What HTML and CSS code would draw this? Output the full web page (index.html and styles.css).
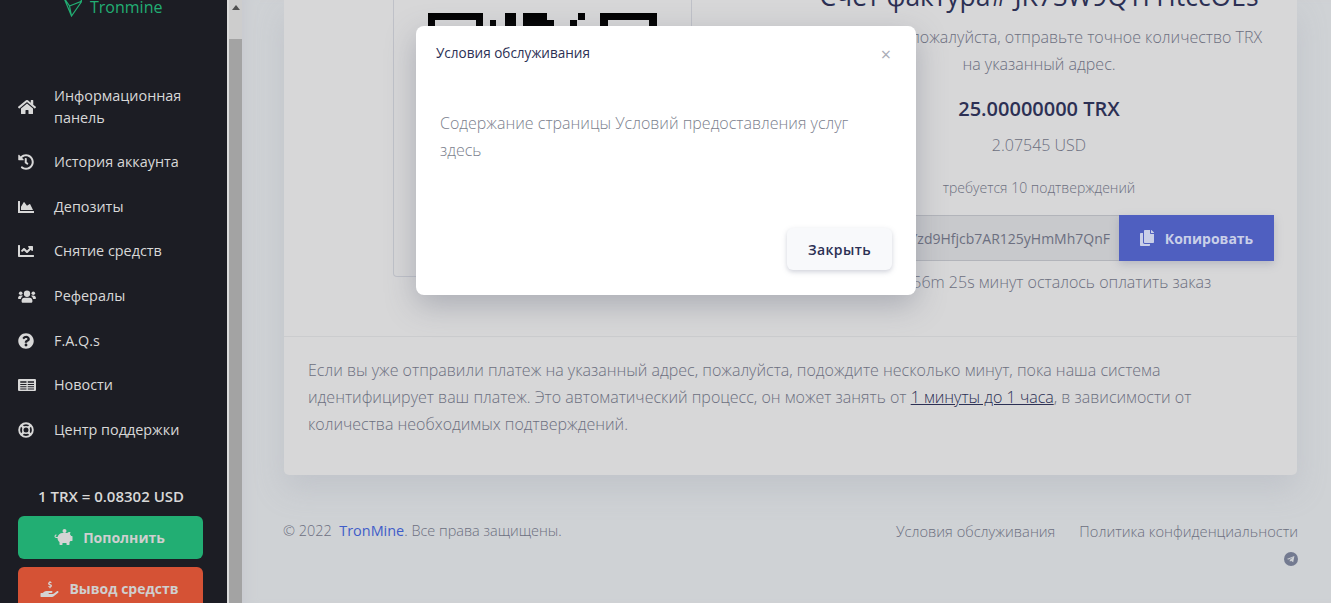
FILE: index.html
```html
<!DOCTYPE html>
<html lang="ru">
<head>
<meta charset="utf-8">
<title>Tronmine</title>
<link rel="stylesheet" href="styles.css">
</head>
<body>
<div class="app">
  <aside class="sidebar">
    <div class="logo">
      <svg class="logo-mark" viewBox="0 0 18 22"><path d="M0 3 7.500 21 18 6 12 0M0 3 5.500 11 7.500 21M5.500 11 18 6"/></svg>
      <span class="logo-text">Tronmine</span>
    </div>
    <ul class="nav">
      <li class="nav-item nav-item-wrap"><span class="nav-icon"><svg viewBox="0 0 576 512"><path d="M280.37 148.26L96 300.11V464a16 16 0 0 0 16 16l112.06-.29a16 16 0 0 0 15.92-16V368a16 16 0 0 1 16-16h64a16 16 0 0 1 16 16v95.64a16 16 0 0 0 16 16.05L464 480a16 16 0 0 0 16-16V300L295.67 148.26a12.19 12.19 0 0 0-15.3 0zM571.6 251.47L488 182.56V44.05a12 12 0 0 0-12-12h-56a12 12 0 0 0-12 12v72.61L318.47 43a48 48 0 0 0-61 0L4.34 251.47a12 12 0 0 0-1.6 16.9l25.5 31A12 12 0 0 0 45.15 301l235.22-193.74a12.19 12.19 0 0 1 15.3 0L530.9 301a12 12 0 0 0 16.9-1.6l25.5-31a12 12 0 0 0-1.7-16.93z"/></svg></span><span>Информационная панель</span></li>
      <li class="nav-item"><span class="nav-icon"><svg viewBox="0 0 512 512"><path d="M504 255.5c.3 136.6-111.1 248.4-247.7 248.5-59 0-113.2-20.5-155.8-54.9-11.1-8.9-11.9-25.5-1.9-35.5l11.3-11.3c8.6-8.6 22.2-9.5 31.6-2C173 425.1 212.8 440 256 440c101.7 0 184-82.3 184-184 0-101.7-82.3-184-184-184-48.8 0-93.1 19-126 49.9l50.8 50.8c10.1 10.1 2.9 27.3-11.3 27.3H24c-8.8 0-16-7.2-16-16V38.6c0-14.3 17.2-21.4 27.3-11.3l49.4 49.4C129.4 31.9 190.1 8 256.4 8 393 8 503.7 118.9 504 255.5zM315 334.2l9.8-12.6c8.1-10.5 6.3-25.5-4.2-33.7L280 256.2V152c0-13.3-10.7-24-24-24h-16c-13.3 0-24 10.7-24 24v135.1l65.4 50.9c10.5 8.1 25.5 6.3 33.6-3.8z"/></svg></span><span>История аккаунта</span></li>
      <li class="nav-item"><span class="nav-icon"><svg viewBox="0 0 512 512"><path d="M500 384c6.6 0 12 5.4 12 12v40c0 6.6-5.4 12-12 12H12c-6.6 0-12-5.4-12-12V76c0-6.6 5.4-12 12-12h40c6.6 0 12 5.4 12 12v308h436zM372.7 159.5L288 216l-85.3-113.7c-5.1-6.8-15.5-6.3-19.9 1L96 248v104h384l-89.9-187.8c-3.2-6.5-11.4-8.7-17.4-4.7z"/></svg></span><span>Депозиты</span></li>
      <li class="nav-item"><span class="nav-icon"><svg viewBox="0 0 512 512"><path d="M496 384H64V80c0-8.84-7.16-16-16-16H16C7.16 64 0 71.16 0 80v336c0 17.67 14.33 32 32 32h464c8.84 0 16-7.16 16-16v-32c0-8.84-7.16-16-16-16zM464 96H345.94c-21.38 0-32.09 25.85-16.97 40.97l32.4 32.4L288 242.75l-73.37-73.37c-12.5-12.5-32.76-12.5-45.25 0l-68.69 68.69c-6.25 6.25-6.25 16.38 0 22.63l22.62 22.62c6.25 6.25 16.38 6.25 22.63 0L192 237.25l73.37 73.37c12.5 12.5 32.76 12.5 45.25 0l96-96 32.4 32.4c15.12 15.12 40.97 4.41 40.97-16.97V112c0-8.84-7.16-16-16-16z"/></svg></span><span>Снятие средств</span></li>
      <li class="nav-item"><span class="nav-icon"><svg viewBox="0 0 640 512"><circle cx="96" cy="160" r="64"/><circle cx="544" cy="160" r="64"/><circle cx="320" cy="176" r="112"/><path d="M0 336c0-53 43-96 96-96h32c18 0 34 5 48 13-40 22-68 63-75 111H32c-18 0-32-10-32-28zM640 336c0-53-43-96-96-96h-32c-18 0-34 5-48 13 40 22 68 63 75 111h69c18 0 32-10 32-28zM224 316h192c53 0 96 43 96 96v36c0 26-22 48-48 48H176c-26 0-48-22-48-48v-36c0-53 43-96 96-96z"/></svg></span><span>Рефералы</span></li>
      <li class="nav-item"><span class="nav-icon"><svg viewBox="0 0 512 512"><path d="M504 256c0 136.997-111.043 248-248 248S8 392.997 8 256C8 119.083 119.043 8 256 8s248 111.083 248 248zM262.655 90c-54.497 0-89.255 22.957-116.549 63.758-3.536 5.286-2.353 12.415 2.715 16.258l34.699 26.31c5.205 3.947 12.621 3.008 16.665-2.122 17.864-22.658 30.113-35.797 57.303-35.797 20.429 0 45.698 13.148 45.698 32.958 0 14.976-12.363 22.667-32.534 33.976C247.128 238.528 216 254.941 216 296v4c0 6.627 5.373 12 12 12h56c6.627 0 12-5.373 12-12v-1.333c0-28.462 83.186-29.647 83.186-106.667 0-58.002-60.165-102-116.531-102zM256 338c-25.365 0-46 20.635-46 46 0 25.364 20.635 46 46 46s46-20.636 46-46c0-25.365-20.635-46-46-46z"/></svg></span><span>F.A.Q.s</span></li>
      <li class="nav-item"><span class="nav-icon"><svg viewBox="0 0 576 512"><path fill-rule="evenodd" d="M40 64h496c22 0 40 18 40 40v304c0 22-18 40-40 40H40c-22 0-40-18-40-40V104c0-22 18-40 40-40zM72 136v48h200v-48zM312 136v48h200v-48zM72 224v32h200v-32zM312 224v32h200v-32zM72 296v32h200v-32zM312 296v32h200v-32zM72 368v32h200v-32zM312 368v32h200v-32z"/></svg></span><span>Новости</span></li>
      <li class="nav-item"><span class="nav-icon"><svg class="ring-icon" viewBox="0 0 512 512"><circle cx="256" cy="256" r="218" stroke-width="60"/><circle cx="256" cy="256" r="104" stroke-width="48"/><path stroke-width="74" d="M102 102 180 180M410 102 332 180M102 410 180 332M410 410 332 332"/></svg></span><span>Центр поддержки</span></li>
    </ul>
    <div class="rate">1 TRX = 0.08302 USD</div>
    <div class="side-actions">
      <a class="side-btn side-btn-green"><svg class="side-btn-icon" viewBox="0 0 576 512"><path d="M560 224h-29.5c-8.8-20-21.6-37.7-37.4-52.5L512 96h-32c-29.4 0-55.4 13.5-73 34.3-7.6-1.1-15.1-2.3-23-2.3H256c-77.4 0-141.9 55-156.8 128H56c-14.8 0-26.5-13.5-23.5-28.8C34.7 215.8 45.4 208 57 208h1c3.3 0 6-2.7 6-6v-20c0-3.3-2.7-6-6-6-28.5 0-53.9 20.4-57.5 48.6C-3.9 258.8 22.7 288 56 288h40c0 52.2 25.4 98.1 64 127.3V496c0 8.8 7.2 16 16 16h64c8.8 0 16-7.2 16-16v-48h128v48c0 8.8 7.2 16 16 16h64c8.8 0 16-7.2 16-16v-80.9c11.8-8.9 22.3-19.4 31.3-31.1H560c8.8 0 16-7.2 16-16V240c0-8.8-7.2-16-16-16z"/><circle cx="320" cy="64" r="64"/></svg><span>Пополнить</span></a>
      <a class="side-btn side-btn-red"><svg class="side-btn-icon" viewBox="0 0 576 512"><path d="M565.3 328.1c-11.8-10.7-30.2-10-42.6 0L430.3 402c-11.3 9.1-25.4 14-40 14H272c-8.8 0-16-7.2-16-16s7.2-16 16-16h78.3c15.9 0 30.7-10.9 33.3-26.6 3.3-20-12.1-37.4-31.6-37.4H192c-27 0-53.1 9.3-74.1 26.3L71.4 384H16c-8.8 0-16 7.2-16 16v96c0 8.8 7.2 16 16 16h356.8c14.5 0 28.6-4.9 40-14L564 377c15.2-12.1 16.4-35.3 1.3-48.9z"/><path d="M288 0v30c-28 5-46 26-46 52 0 28 20 44 46 52l20 7c10 3 14 8 14 15 0 9-8 15-19 15h-20c-8 0-15-3-21-8l-20 24c10 9 24 15 46 17v28h32v-28c28-4 46-25 46-52 0-28-20-44-46-52l-20-7c-10-3-14-8-14-15 0-9 8-15 19-15h16c8 0 15 3 21 8l20-24c-10-9-24-15-42-17V0z"/></svg><span>Вывод средств</span></a>
    </div>
  </aside>
  <div class="fake-scrollbar">
    <span class="scroll-arrow"></span>
    <span class="scroll-thumb"></span>
  </div>
  <main class="main">
    <section class="card">
      <div class="card-top">
        <div class="qr-box">
          <svg class="qr" viewBox="0 0 230 230" shape-rendering="crispEdges">
            <path fill-rule="evenodd" d="M0 0H55V55H0ZM7 7V48H48V7Z"/>
            <path fill-rule="evenodd" d="M172 0H229V55H172ZM180 7V48H221V7Z"/>
            <path d="M62 7h6v40h-6zM77 0h11v40h-11zM95 0h24v40h-24zM119 7h7v20h-7zM142 7h7v30h-7zM150 0h7v7h-7z"/>
          </svg>
        </div>
        <div class="pay">
          <h2 class="pay-title">Счет фактура# JK7SW9QYFHtccOEs</h2>
          <p class="pay-text">Для оплаты, пожалуйста, отправьте точное количество TRX на указанный адрес.</p>
          <div class="pay-amount">25.00000000 TRX</div>
          <div class="pay-usd">2.07545 USD</div>
          <div class="pay-conf">требуется 10 подтверждений</div>
          <div class="copy-row">
            <div class="copy-input"><span>TRYzd9Hfjcb7AR125yHmMh7QnF</span></div>
            <a class="copy-btn"><svg class="copy-icon" viewBox="0 0 448 512"><path d="M320 448v40c0 13.3-10.7 24-24 24H24c-13.3 0-24-10.7-24-24V120c0-13.3 10.7-24 24-24h72v296c0 30.9 25.1 56 56 56h168zm0-344V0H152c-13.3 0-24 10.7-24 24v368c0 13.3 10.7 24 24 24h272c13.3 0 24-10.7 24-24V128H344c-13.200 0-24-10.800-24-24zm120.970-31.030L375 7.030A24 24 0 0 0 358.060 0H352v96h96v-6.060a24 24 0 0 0-7.030-16.970z"/></svg><span>Копировать</span></a>
          </div>
          <div class="pay-timer">0d 0h 56m 25s минут осталось оплатить заказ</div>
        </div>
      </div>
      <div class="card-note">
        Если вы уже отправили платеж на указанный адрес, пожалуйста, подождите несколько минут, пока наша система идентифицирует ваш платеж. Это автоматический процесс, он может занять от <a class="note-link">1 минуты до 1 часа</a>, в зависимости от количества необходимых подтверждений.
      </div>
    </section>
    <footer class="footer">
      <div class="footer-row">
        <span>© 2022 &nbsp;<a class="brand-link">TronMine</a>. Все права защищены.</span>
        <span class="footer-links"><a>Условия обслуживания</a><a>Политика конфиденциальности</a></span>
      </div>
      <div class="footer-social">
        <svg class="tg" viewBox="0 0 14 14"><circle cx="7" cy="7" r="7" class="tg-bg"/><path class="tg-plane" d="M2.800 6.900 10.400 4 9.200 10.300 7 8.700 5.900 9.700 5.700 8 9 5.200 4.700 7.600Z"/></svg>
      </div>
    </footer>
  </main>
</div>
<div class="modal" role="dialog">
  <div class="modal-head">
    <h5 class="modal-title">Условия обслуживания</h5>
    <span class="modal-close">×</span>
  </div>
  <div class="modal-body">Содержание страницы Условий предоставления услуг здесь</div>
  <div class="modal-foot"><a class="modal-btn">Закрыть</a></div>
</div>
</body>
</html>
```
FILE: styles.css
```css
* { box-sizing: border-box; }
html, body { margin: 0; height: 100%; overflow: hidden; }
body { font-family: "Open Sans", "Noto Sans", sans-serif; background: #cfd2d5; color: #6c6f80; }
a { text-decoration: none; }
h2, h5, p { margin: 0; }

.app { display: flex; height: 603px; overflow: hidden; }

.sidebar { width: 227px; flex: none; background: #1c1d24; color: #d8d8d8; display: flex; flex-direction: column; overflow: hidden; }
.logo { display: flex; height: 24px; margin-top: -5px; padding-left: 64px; gap: 8px; flex: none; }
.logo-mark { width: 18px; height: 22px; flex: none; fill: none; stroke: #22ae73; stroke-width: 1.2; }
.logo-text { font-size: 16px; font-weight: 400; color: #22ae73; line-height: 24px; }

.nav { list-style: none; margin: 54.800px 0 0; padding: 0; flex: none; }
.nav-item { display: flex; align-items: center; padding: 11.350px 30px 11.350px 18px; font-size: 14.400px; line-height: 22px; }
.nav-item-wrap { padding-bottom: 10.350px; }
.nav-icon { width: 36px; flex: none; display: flex; }
.nav-icon svg { height: 16px; width: auto; max-width: 18px; fill: #d8d8d8; }
.nav-icon .ring-icon { fill: none; stroke: #d8d8d8; }

.rate { margin-top: 33.700px; padding-right: 5px; text-align: center; font-size: 15px; font-weight: 600; line-height: 20px; color: #d8d8d8; flex: none; }
.side-actions { display: flex; flex-direction: column; gap: 8px; margin: 10px 24px 0 18px; flex: none; }
.side-btn { height: 43px; padding-right: 2px; border-radius: 6px; display: flex; align-items: center; justify-content: center; gap: 10px; color: #cfcfcf; font-size: 14px; font-weight: 700; }
.side-btn-green { background: #22ae73; }
.side-btn-red { background: #d55235; height: 44px; }
.side-btn-icon { width: 19px; height: 16px; fill: #d4d4d4; }

.fake-scrollbar { width: 15px; flex: none; background: #cdcdcd; border-left: 2px solid #dcdcdc; display: flex; flex-direction: column; align-items: center; }
.scroll-arrow { width: 0; height: 0; margin-top: 5px; border: 4px solid transparent; border-top: 0; border-bottom: 5px solid #505050; }
.scroll-thumb { align-self: stretch; flex: 1; margin-top: 29px; background: #a3a3a3; }

.main { flex: 1; min-width: 0; padding: 0 34px 0 42px; background: #cfd2d5; box-shadow: inset 12px 0 12px -8px #c8cad0; }

.card { background: #d7d7d8; border-radius: 0 0 5px 5px; box-shadow: 0 14px 30px rgba(150, 155, 170, .25); }
.card-top { display: flex; height: 337px; padding-left: 109px; border-bottom: 1px solid #cbccce; }
.qr-box { width: 299px; height: 277px; flex: none; padding: 13px 0 0 34px; border: 1px solid #bfc1c8; border-top: 0; border-radius: 0 0 4px 4px; }
.qr { display: block; width: 230px; height: 230px; }

.pay { flex: 1; min-width: 0; display: flex; flex-direction: column; align-items: center; padding: 0 23px 0 112px; text-align: center; }
.pay-title { margin-top: -20px; font-size: 26.500px; font-weight: 400; line-height: 32px; color: #2c3054; white-space: nowrap; }
.pay-text { margin-top: 11.500px; font-size: 16px; font-weight: 300; line-height: 27px; width: 460px; }
.pay-amount { margin-top: 16.500px; font-size: 20px; font-weight: 600; line-height: 30px; color: #2c3054; }
.pay-usd { margin-top: 7.500px; font-size: 16px; font-weight: 300; line-height: 27px; }
.pay-conf { margin-top: 18px; font-size: 14px; font-weight: 300; line-height: 21px; }
.copy-row { display: flex; align-self: stretch; height: 46px; margin-top: 17.500px; }
.copy-input { flex: 1; min-width: 0; overflow: hidden; display: flex; justify-content: flex-end; align-items: center; padding-right: 9px; background: #c8c9cc; border: 1px solid #b2b4ba; border-right: 0; font-size: 14px; white-space: nowrap; }
.copy-btn { width: 155px; flex: none; background: #4f5fc0; color: #c9cfe8; display: flex; align-items: center; justify-content: center; gap: 11px; font-size: 14px; font-weight: 700; box-shadow: 0 3px 8px rgba(120, 125, 150, .35); }
.copy-icon { width: 14px; height: 16px; fill: #c9cfe8; }
.pay-timer { margin-top: 7.500px; font-size: 16px; font-weight: 300; line-height: 27px; }

.card-note { height: 138px; padding: 20px 90px 0 24px; font-size: 16px; font-weight: 300; line-height: 27px; }
.note-link { color: #2c3054; text-decoration: underline; }

.footer { margin: 44px -1px 0; font-size: 14.450px; font-weight: 300; line-height: 24px; }
.footer-row { display: flex; justify-content: space-between; }
.brand-link { color: #3f5dc9; font-weight: 400; }
.footer-links { display: flex; gap: 24px; font-size: 14.650px; }
.footer-social { display: flex; justify-content: flex-end; margin-top: 9px; }
.tg { width: 14px; height: 14px; display: block; }
.tg-bg { fill: #737a90; }
.tg-plane { fill: #cfd2d5; }

.modal { position: absolute; left: 416px; top: 26px; width: 500px; height: 269px; background: #fff; border-radius: 8px; box-shadow: 0 10px 30px rgba(90, 95, 115, .35); display: flex; flex-direction: column; }
.modal-head { display: flex; justify-content: space-between; align-items: center; height: 55px; padding: 0 25px 0 20px; flex: none; }
.modal-title { font-size: 13.550px; font-weight: 500; color: #2c3054; line-height: 55px; }
.modal-close { font-size: 18px; color: #a9acb6; line-height: 1; }
.modal-body { flex: 1; padding: 29px 60px 0 24px; font-size: 16px; font-weight: 300; line-height: 27px; color: #7c7f8e; }
.modal-foot { display: flex; justify-content: flex-end; padding: 0 24px 25px 0; flex: none; }
.modal-btn { width: 105px; height: 42px; padding-top: 1px; display: flex; align-items: center; justify-content: center; background: #f8f9fb; border-radius: 6px; color: #2c3054; font-size: 14px; font-weight: 600; letter-spacing: .4px; box-shadow: 0 2px 5px rgba(120, 125, 150, .35); }
```
